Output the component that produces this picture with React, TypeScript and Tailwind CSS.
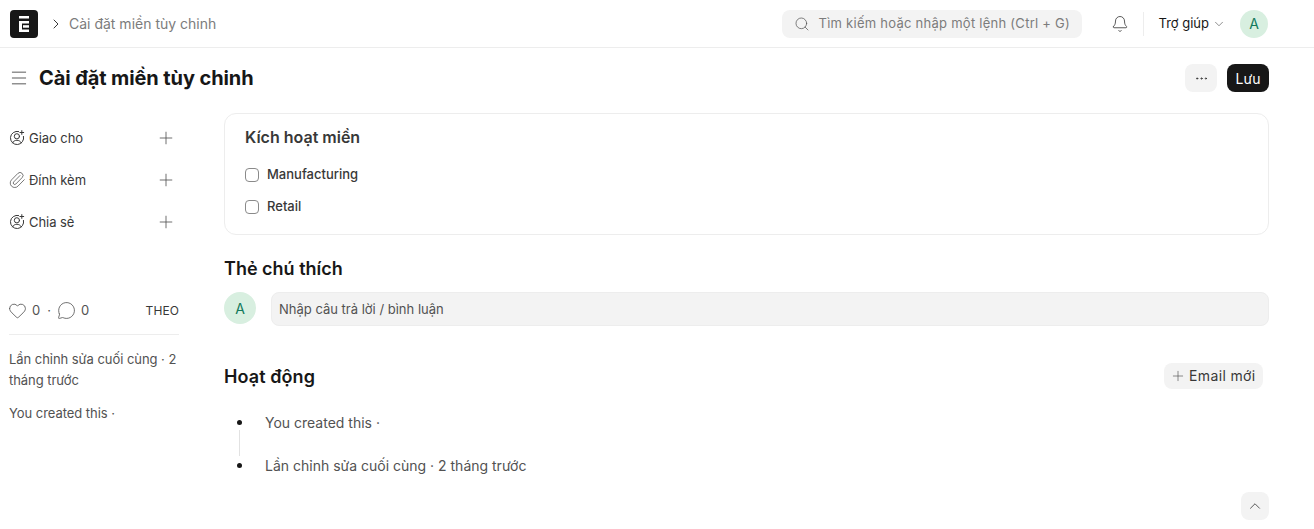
import { Bell, ChevronDown, ChevronRight, ChevronUp, Ellipsis, Heart, Menu, MessageCircle, Paperclip, Plus, Search } from 'lucide-react'

function Avatar({ size }: { size: string }) {
    return <div className={`${size} flex items-center justify-center rounded-full bg-[#d8efe0] text-[#137a5c] text-[14px] shrink-0`}>A</div>
}

function AssignIcon() {
    return (
        <svg width="16" height="16" viewBox="0 0 16 16" fill="none" stroke="#383838" strokeWidth="1" strokeLinecap="round" className="shrink-0">
            <path d="M9.6 1.5A6.6 6.6 0 1 0 14.5 6.4" />
            <circle cx="7.9" cy="6.3" r="2.6" />
            <path d="M3.5 12.9c.9-1.8 2.5-2.6 4.4-2.6s3.5.8 4.4 2.6" />
            <path d="M12.8 0.6v3.8M10.9 2.5h3.8" />
        </svg>
    )
}

function SideAction({ icon, label }: { icon: React.ReactNode; label: string }) {
    return (
        <div className="flex items-center h-[42px]">
            <div className="flex items-center gap-[4px] flex-1 text-[13px] tracking-[-0.05px] text-[#383838]">
                {icon}
                <span className="pt-[2px]">{label}</span>
            </div>
            <Plus size={20} strokeWidth={1} className="text-[#525252] mr-[3px]" />
        </div>
    )
}

function DomainCheck({ label }: { label: string }) {
    return (
        <label className="flex items-center gap-[8px] h-[32px] text-[13px] font-medium text-[#383838]">
            <span className="w-[14px] h-[14px] rounded-[4px] border border-[#8a8a8a] bg-white" />
            {label}
        </label>
    )
}

export default function App() {
    return (
        <div className="h-[529px] overflow-hidden bg-white font-['Inter',sans-serif] text-[#171717]">
            <header className="h-[48px] border-b border-[#ededed] flex items-center pl-[10px] pr-[46px]">
                <svg width="28" height="28" viewBox="0 0 28 28" className="shrink-0">
                    <rect width="28" height="28" rx="4" fill="#171717" />
                    <g fill="#fff">
                        <rect x="9" y="6" width="10" height="2.5" />
                        <rect x="9" y="11" width="10" height="2.5" />
                        <rect x="9" y="11" width="3" height="11" />
                        <rect x="9" y="19.5" width="10" height="2.5" />
                        <rect x="13" y="15.2" width="6" height="2.5" />
                    </g>
                </svg>
                <ChevronRight size={16} strokeWidth={1.5} className="ml-[10px] text-[#383838]" />
                <span className="ml-[5px] text-[14px] text-[#7c7c7c] flex-1">Cài đặt miền tùy chinh</span>
                <div className="w-[300px] h-[28px] rounded-[8px] bg-[#f3f3f3] flex items-center pl-[12px] gap-[8px]">
                    <Search size={16} strokeWidth={1.1} className="text-[#525252]" />
                    <span className="text-[13px] text-[#7c7c7c] tracking-[0.26px] whitespace-nowrap">Tìm kiếm hoặc nhập một lệnh (Ctrl + G)</span>
                </div>
                <Bell size={18} strokeWidth={1.1} className="ml-[29px] text-[#383838]" />
                <div className="ml-[14px] w-px h-[24px] bg-[#ededed]" />
                <span className="ml-[14px] text-[13px] text-[#171717]">Trợ giúp</span>
                <ChevronDown size={14} strokeWidth={1.1} className="ml-[3px] text-[#525252]" />
                <div className="ml-[14px]">
                    <Avatar size="w-[28px] h-[28px]" />
                </div>
            </header>

            <div className="h-[60px] flex items-center pl-[9px] pr-[45px]">
                <Menu size={20} strokeWidth={1} className="text-[#383838]" />
                <h1 className="ml-[10px] flex-1 text-[20px] font-bold leading-[28px] tracking-[-0.1px]">Cài đặt miền tùy chinh</h1>
                <button className="w-[32px] h-[28px] rounded-[8px] bg-[#f3f3f3] flex items-center justify-center">
                    <Ellipsis size={15} strokeWidth={1.5} className="text-[#383838]" />
                </button>
                <button className="ml-[10px] w-[42px] h-[28px] rounded-[8px] bg-[#171717] text-white text-[14px]">Lưu</button>
            </div>

            <div className="flex pl-[9px] pr-[45px]">
                <aside className="w-[170px] shrink-0 pt-[9px]">
                    <SideAction icon={<AssignIcon />} label="Giao cho" />
                    <SideAction icon={<Paperclip size={18} strokeWidth={0.9} className="text-[#383838] -ml-[1px] -mr-[1px]" />} label="Đính kèm" />
                    <SideAction icon={<AssignIcon />} label="Chia sẻ" />
                    <div className="mt-[49px] h-[43px] flex items-center border-b border-[#ededed] pb-[5px] text-[13px] text-[#525252]">
                        <Heart size={19} strokeWidth={0.9} className="-ml-[1px] text-[#383838]" />
                        <span className="ml-[5px]">0</span>
                        <span className="ml-[7px]">·</span>
                        <MessageCircle size={19} strokeWidth={0.9} className="ml-[6px] text-[#383838]" />
                        <span className="ml-[5px] flex-1">0</span>
                        <span className="text-[12px] tracking-[0.1px] text-[#383838]">THEO</span>
                    </div>
                    <p className="mt-[14px] text-[13px] leading-[21px] tracking-[-0.05px] text-[#525252]">Lần chỉnh sửa cuối cùng · 2 tháng trước</p>
                    <p className="mt-[12px] text-[13px] leading-[21px] tracking-[-0.05px] text-[#525252]">You created this ·</p>
                </aside>

                <main className="flex-1 ml-[45px] pt-[5px]">
                    <section className="h-[122px] rounded-[12px] border border-[#ededed] px-[20px] pt-[13px]">
                        <h2 className="text-[16px] font-semibold leading-[21px] text-[#383838]">Kích hoạt miền</h2>
                        <div className="mt-[11px]">
                            <DomainCheck label="Manufacturing" />
                            <DomainCheck label="Retail" />
                        </div>
                    </section>

                    <h2 className="mt-[22px] text-[18px] font-semibold leading-[24px]">Thẻ chú thích</h2>
                    <div className="mt-[11px] flex gap-[15px]">
                        <Avatar size="w-[32px] h-[32px]" />
                        <div className="flex-1 h-[34px] rounded-[8px] border border-[#ededed] bg-[#f3f3f3] flex items-center pl-[7px] pt-[2px] text-[13px] text-[#525252]">
                            Nhập câu trả lời / bình luận
                        </div>
                    </div>

                    <div className="mt-[37px] flex items-start pr-[6px]">
                        <h2 className="flex-1 h-[26px] pt-[1px] text-[18px] font-semibold leading-[26px] tracking-[0.08px]">Hoạt động</h2>
                        <button className="w-[99px] h-[26px] rounded-[8px] bg-[#f3f3f3] flex items-center pl-[6px] gap-[3px] text-[14px] tracking-[0.37px] text-[#383838]">
                            <Plus size={16} strokeWidth={1} className="text-[#525252]" />
                            <span className="pb-[1px]">Email mới</span>
                        </button>
                    </div>

                    <ul className="mt-[25px] text-[14px] text-[#525252]">
                        <li className="flex items-center h-[16px]">
                            <span className="ml-[13px] w-[5px] h-[5px] rounded-full bg-[#171717]" />
                            <span className="ml-[23px]">You created this ·</span>
                        </li>
                        <li className="ml-[15px] w-px h-[26px] bg-[#e2e2e2]" />
                        <li className="flex items-center h-[18px]">
                            <span className="ml-[13px] w-[5px] h-[5px] rounded-full bg-[#171717]" />
                            <span className="ml-[23px]">Lần chỉnh sửa cuối cùng · 2 tháng trước</span>
                        </li>
                    </ul>

                    <div className="mt-[18px] flex justify-end">
                        <button className="w-[28px] h-[28px] rounded-[8px] bg-[#f3f3f3] flex items-center justify-center">
                            <ChevronUp size={18} strokeWidth={1.1} className="text-[#383838]" />
                        </button>
                    </div>
                </main>
            </div>
        </div>
    )
}
